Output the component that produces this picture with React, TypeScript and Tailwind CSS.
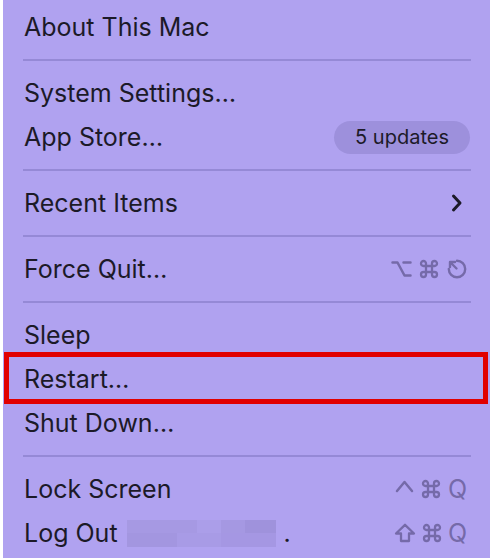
import React from "react";

const Sep = () => (
  <div className="h-[22px] flex items-center pl-[20px] pr-[19px]">
    <div className="h-[2px] w-full bg-[#9589d6]" />
  </div>
);

const Row = ({ children, right }: { children: React.ReactNode; right?: React.ReactNode }) => (
  <div className="h-[44px] flex items-center justify-between pl-[21px] pr-[20px]">
    <div className="text-[25px] text-[#1c1a28] leading-none">{children}</div>
    {right}
  </div>
);

const C = "#756aa9";

const Cmd = () => (
  <svg width="20" height="20" viewBox="0 0 20 20">
    <path
      d="M7 7 V4.5 A2.5 2.5 0 1 0 4.5 7 H15.5 A2.5 2.5 0 1 0 13 4.5 V15.5 A2.5 2.5 0 1 0 15.5 13 H4.5 A2.5 2.5 0 1 0 7 15.5 Z"
      fill="none"
      stroke={C}
      strokeWidth="2.3"
      strokeLinejoin="round"
    />
  </svg>
);

const Opt = () => (
  <svg width="21" height="18" viewBox="0 0 21 18">
    <path d="M1.5 2.5 H6.5 L13.5 15.5 H19.5 M12.5 2.5 H19.5" fill="none" stroke={C} strokeWidth="2.5" strokeLinecap="round" strokeLinejoin="round" />
  </svg>
);

const Ctrl = () => (
  <svg width="19" height="14" viewBox="0 0 19 14">
    <path d="M2 12 L9.5 3 L17 12" fill="none" stroke={C} strokeWidth="2.5" strokeLinecap="round" strokeLinejoin="round" />
  </svg>
);

const Shift = () => (
  <svg width="22" height="20" viewBox="0 0 22 20">
    <path d="M11 1.8 L20 10.5 H15 V18 H7 V10.5 H2 Z" fill="none" stroke={C} strokeWidth="2.3" strokeLinejoin="round" />
  </svg>
);

const Restart = () => (
  <svg width="22" height="22" viewBox="0 0 22 22">
    <path d="M11 2.8 A8.2 8.2 0 1 1 2.8 11" fill="none" stroke={C} strokeWidth="2.4" strokeLinecap="round" />
    <path d="M10.5 10.5 L4 4 M4 4 L4 9 M4 4 L9 4" fill="none" stroke={C} strokeWidth="2.4" strokeLinecap="round" strokeLinejoin="round" />
  </svg>
);

export default function App() {
  return (
    <div className="w-[493px] h-[558px] bg-white px-[3px] relative font-['Inter','Noto_Sans',sans-serif]">
      <div className="h-full bg-[#b0a2f0] pt-[5px]">
        <Row>About This Mac</Row>
        <Sep />
        <Row>System Settings…</Row>
        <Row
          right={
            <div className="h-[33px] w-[136px] rounded-full bg-[#9d90dc] flex items-center justify-center text-[20px] text-[#1c1a28]">
              5 updates
            </div>
          }
        >
          App Store…
        </Row>
        <Sep />
        <Row
          right={
            <svg width="12" height="20" viewBox="0 0 12 20" className="mr-[7px]">
              <path d="M2.5 3 L9 10 L2.5 17" fill="none" stroke="#1c1a28" strokeWidth="3" strokeLinecap="round" strokeLinejoin="round" />
            </svg>
          }
        >
          Recent Items
        </Row>
        <Sep />
        <Row
          right={
            <div className="flex items-center gap-[7px] mr-[2px]">
              <Opt />
              <Cmd />
              <Restart />
            </div>
          }
        >
          Force Quit…
        </Row>
        <Sep />
        <Row>Sleep</Row>
        <Row>Restart…</Row>
        <Row>Shut Down…</Row>
        <Sep />
        <Row
          right={
            <div className="flex items-center gap-[7px] mr-[3px]">
              <span className="-mt-[6px]">
                <Ctrl />
              </span>
              <Cmd />
              <span className="text-[25px] leading-none text-[#756aa9]">Q</span>
            </div>
          }
        >
          Lock Screen
        </Row>
        <Row
          right={
            <div className="flex items-center gap-[6px] mr-[3px]">
              <Shift />
              <Cmd />
              <span className="text-[25px] leading-none text-[#756aa9]">Q</span>
            </div>
          }
        >
          <span className="flex items-center">
            Log Out
            <span className="ml-[9px] inline-flex h-[27px] w-[149px] flex-col">
              <span className="flex h-[13px]">
                <span className="w-[70px] bg-[#a699e3]" />
                <span className="w-[24px] bg-[#ab9ee9]" />
                <span className="w-[24px] bg-[#a598e2]" />
                <span className="w-[31px] bg-[#9f92dc]" />
              </span>
              <span className="flex h-[14px]">
                <span className="w-[50px] bg-[#a396e0]" />
                <span className="w-[44px] bg-[#a89be6]" />
                <span className="w-[55px] bg-[#a597e3]" />
              </span>
            </span>
            <span className="ml-[8px]">.</span>
          </span>
        </Row>
      </div>
      <div className="absolute left-[4px] top-[352px] w-[484px] h-[52px] border-[5px] border-[#e10000]" />
    </div>
  );
}
